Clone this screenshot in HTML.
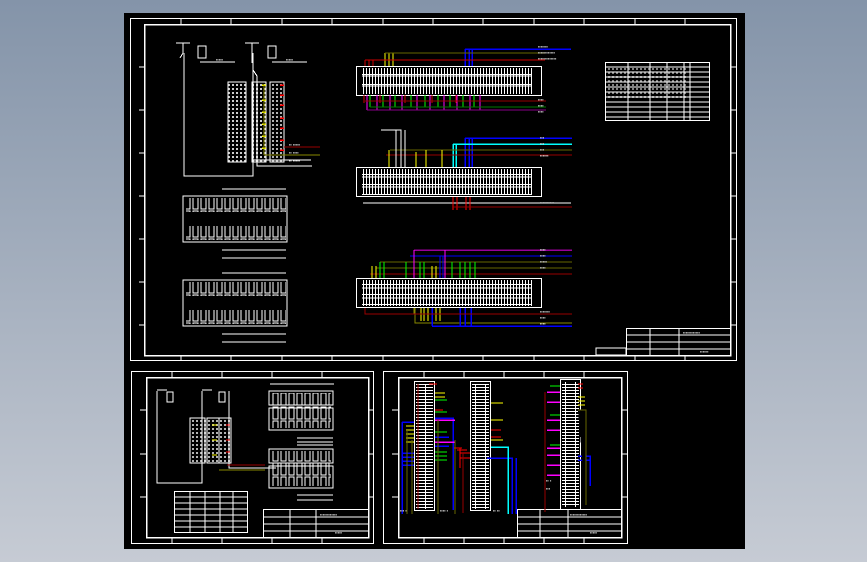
<!DOCTYPE html><html><head><meta charset="utf-8"><style>
html,body{margin:0;padding:0}
body{width:867px;height:562px;overflow:hidden;background:linear-gradient(#8494a9,#c6cbd4);font-family:"Liberation Sans",sans-serif}
svg{position:absolute;left:0;top:0}
</style></head><body>
<svg width="867" height="562" viewBox="0 0 867 562" shape-rendering="crispEdges">
<defs>
<pattern id="vl" width="3" height="10" patternUnits="userSpaceOnUse"><rect x="0" y="0" width="1" height="10" fill="#fff"/><rect x="0" y="4" width="3" height="1" fill="#fff"/></pattern>
<pattern id="hl" width="10" height="3" patternUnits="userSpaceOnUse"><rect x="0" y="0" width="10" height="1" fill="#fff"/><rect x="5" y="0" width="1" height="3" fill="#fff"/></pattern>
<pattern id="sm" width="4" height="4" patternUnits="userSpaceOnUse"><rect width="2" height="2" fill="#fff"/></pattern>
<pattern id="blk" width="8" height="14" patternUnits="userSpaceOnUse"><rect x="1" y="1" width="5" height="12" fill="none" stroke="#fff"/></pattern>
</defs>
<rect x="124" y="13" width="621" height="536" fill="#000"/>
<g fill="none" stroke="#fff" stroke-width="1">
<rect x="130.5" y="18.5" width="606" height="342"/>
<rect x="144.5" y="24.5" width="586" height="331" stroke-width="1.5"/>
<rect x="131.5" y="371.5" width="242" height="172"/>
<rect x="146.5" y="377.5" width="222" height="160" stroke-width="1.5"/>
<rect x="383.5" y="371.5" width="244" height="172"/>
<rect x="398.5" y="377.5" width="223" height="160" stroke-width="1.5"/>
</g>
<g stroke="#fff">
<path d="M181 18v6M231 18v6M282 18v6M332 18v6M383 18v6M433 18v6M483 18v6M534 18v6M584 18v6M635 18v6M685 18v6M181 355v6M231 355v6M282 355v6M332 355v6M383 355v6M433 355v6M483 355v6M534 355v6M584 355v6M635 355v6M685 355v6M139 67h6M139 110h6M139 153h6M139 196h6M139 239h6M139 282h6M139 325h6M730 67h6M730 110h6M730 153h6M730 196h6M730 239h6M730 282h6M730 325h6"/>
<path d="M172 371v6M222 371v6M272 371v6M322 371v6M172 537v6M222 537v6M272 537v6M322 537v6M140 410h6M140 454h6M140 497h6M368 410h6M368 454h6M368 497h6"/>
<path d="M424 371v6M464 371v6M504 371v6M544 371v6M584 371v6M424 537v6M464 537v6M504 537v6M544 537v6M584 537v6M392 410h6M392 454h6M392 497h6M621 410h6M621 454h6M621 497h6"/>
</g>
<g stroke="#fff" fill="none">
<path d="M176 43h14M245 43h14M183 43v10l-3 5M252 43v20M184 53v123h69V53"/>
<rect x="198" y="46" width="8" height="12"/><rect x="268" y="46" width="8" height="12"/>
<path d="M200 62h35M272 62h35M253 70l4 6v90h55M253 160h58"/>
<rect x="228" y="82" width="18" height="80"/><rect x="252" y="82" width="14" height="80"/><rect x="270" y="82" width="14" height="80"/>
</g>
<rect x="228" y="82" width="18" height="80" fill="url(#sm)" opacity=".8"/>
<rect x="252" y="82" width="14" height="80" fill="url(#sm)" opacity=".8"/>
<rect x="270" y="82" width="14" height="80" fill="url(#sm)" opacity=".7"/>
<g stroke="#ff0" stroke-width="1.5"><path d="M262 85h4M262 100h4M262 112h4M262 124h4M262 136h4M262 148h4"/></g>
<g stroke="#f00" stroke-width="1.5"><path d="M280 85h4M280 95h4M280 105h4M280 118h4M280 128h4M280 140h4M280 150h4"/></g>
<path d="M284 147h36" stroke="#900"/><path d="M264 155h56M264 85v70" stroke="#880" fill="none"/>
<g fill="#fff" font-size="4"><text x="289" y="146">▪▪ ▪▪▪▪▪</text><text x="289" y="154">▪▪ ▪▪▪▪</text><text x="289" y="162">▪▪ ▪▪▪▪▪</text><text x="216" y="61">▪▪▪▪▪</text><text x="286" y="61">▪▪▪▪▪</text></g>
<g stroke="#fff" fill="none">
<path d="M222 189h64M222 250h64M222 258h64M222 273h64M222 334h64M222 342h64"/>
<rect x="183" y="196" width="104" height="46"/><rect x="183" y="280" width="104" height="46"/>
</g>
<rect x="186" y="198" width="100" height="14" fill="url(#blk)"/><rect x="186" y="226" width="100" height="14" fill="url(#blk)"/>
<rect x="186" y="282" width="100" height="14" fill="url(#blk)"/><rect x="186" y="310" width="100" height="14" fill="url(#blk)"/>
<g stroke="#fff" fill="none"><rect x="356.5" y="66.5" width="185" height="29"/><rect x="356.5" y="167.5" width="185" height="29"/><rect x="356.5" y="278.5" width="185" height="29"/></g>
<rect x="362" y="68" width="170" height="26" fill="url(#vl)"/><rect x="362" y="169" width="170" height="26" fill="url(#vl)"/><rect x="362" y="280" width="170" height="26" fill="url(#vl)"/>
<g stroke="#fff"><path d="M362 76h170M362 86h170M362 177h170M362 187h170M362 288h170M362 298h170M363 203h208"/></g>
<path d="M465 49h106M465 49v17M469 49v17M472 49v17" stroke="#00f" stroke-width="1.5" fill="none"/>
<path d="M385 53h160M385 53v13M389 53v13M393 53v13" stroke="#ff0" fill="none"/>
<path d="M385 53h160" stroke="#660"/>
<path d="M365 60h180M365 60v6M369 60v6M373 60v6" stroke="#c00" fill="none"/>
<g stroke="#0f0"><path d="M370 95v12M383 95v12M395 95v12M411 95v12M425 95v12M438 95v12M450 95v12M463 95v12M474 95v12"/></g>
<g stroke="#f0f"><path d="M367 95v15M377 95v15M390 95v15M402 95v15M417 95v15M430 95v15M444 95v15M457 95v15M470 95v15M480 95v15"/></g>
<g stroke="#c00"><path d="M364 95v8M380 95v8M405 95v8M432 95v8M456 95v8"/></g>
<path d="M365 101h181" stroke="#900"/><path d="M370 107h176" stroke="#070"/><path d="M367 110h179" stroke="#808"/>
<path d="M465 138h107M465 138v29M469 138v29M472 138v29" stroke="#00f" stroke-width="1.5" fill="none"/>
<path d="M453 144h119M453 144v23M456 144v23" stroke="#0ff" stroke-width="1.5" fill="none"/>
<path d="M390 150h182" stroke="#660"/><path d="M386 155h186" stroke="#900"/>
<g stroke="#ff0"><path d="M389 150v17M416 152v15M426 150v17M442 150v17"/></g>
<g stroke="#fff" fill="none"><path d="M381 130h20v37M396 130v37M405 130v37"/></g>
<g stroke="#f00"><path d="M453 197v13M457 197v13M466 197v13M470 197v13"/></g>
<path d="M453 207h119" stroke="#900"/>
<path d="M414 250h158" stroke="#909" stroke-width="1.5"/><path d="M410 256h162" stroke="#00f"/>
<path d="M380 262h192M376 268h196" stroke="#660"/><path d="M370 274h202" stroke="#900"/>
<g stroke="#0f0"><path d="M380 262v16M384 262v16M406 262v16M420 262v16M424 262v16M452 262v16M460 262v16M465 262v16M470 262v16M475 262v16"/></g>
<g stroke="#ff0"><path d="M372 266v12M376 266v12M432 266v12M436 266v12"/></g>
<g stroke="#f0f"><path d="M414 250v28M445 250v28"/></g>
<g stroke="#00f"><path d="M440 256v22M443 256v22"/></g>
<path d="M415 308v15h157M414 308v6" stroke="#880" fill="none"/>
<g stroke="#ff0"><path d="M421 308v13M424 308v13M428 308v13M432 308v13M436 308v13M440 308v13"/></g>
<path d="M432 326h140M432 308v18M460 308v18M465 308v18M471 308v18" stroke="#00f" stroke-width="1.5" fill="none"/>
<path d="M365 308v6h207" stroke="#900" fill="none"/>
<g fill="#fff" font-size="4"><text x="538" y="48">▪▪▪▪▪▪▪</text><text x="538" y="54">▪▪▪▪▪▪▪▪▪▪▪▪</text><text x="538" y="60">▪▪▪▪▪▪▪▪▪▪▪▪▪</text><text x="538" y="101">▪▪▪▪</text><text x="538" y="107">▪▪▪▪</text><text x="538" y="113">▪▪▪▪</text><text x="540" y="139">▪▪▪</text><text x="540" y="145">▪▪▪</text><text x="540" y="151">▪▪▪</text><text x="540" y="157">▪▪▪▪▪▪</text><text x="540" y="204">▪▪▪▪▪▪▪▪▪▪</text><text x="540" y="251">▪▪▪▪</text><text x="540" y="257">▪▪▪▪</text><text x="540" y="263">▪▪▪▪▪</text><text x="540" y="269">▪▪▪▪</text><text x="540" y="313">▪▪▪▪▪▪▪</text><text x="540" y="319">▪▪▪▪</text><text x="540" y="325">▪▪▪▪</text></g>
<g stroke="#fff" fill="none"><rect x="605.5" y="62.5" width="104" height="58"/><path d="M605 67h104M605 72h104M605 77h104M605 82h104M605 87h104M605 92h104M605 97h104M605 102h104M605 107h104M605 112h104M605 117h104M628 62v58M650 62v58M667 62v58M684 62v58M690 62v58"/></g>
<rect x="608" y="68" width="80" height="30" fill="url(#sm)" opacity=".5"/>
<g stroke="#fff" fill="none"><rect x="626.5" y="328.5" width="104" height="27"/><path d="M679 328v27M626 335h104M626 342h104M626 349h104M650 328v27M596 348h30v7h-30z"/></g>
<g fill="#fff" font-size="4"><text x="683" y="334">▪▪▪▪▪▪▪▪▪▪▪▪</text><text x="700" y="353">▪▪▪▪▪▪</text></g>
<g stroke="#fff" fill="none">
<path d="M157 391v92h45V391M229 391v77h47M157 390h10M202 390h10"/>
<rect x="167" y="392" width="6" height="10"/><rect x="219" y="392" width="6" height="10"/>
<rect x="190" y="418" width="15" height="45"/><rect x="207" y="418" width="12" height="45"/><rect x="219" y="418" width="12" height="45"/>
<rect x="269" y="391" width="64" height="14"/><rect x="269" y="408" width="64" height="22"/><rect x="269" y="449" width="64" height="14"/><rect x="269" y="466" width="64" height="22"/>
<path d="M270 384h64M297 438h36M297 445h36M297 442h36M297 495h36M297 500h36"/>
<rect x="174.5" y="491.5" width="73" height="41"/><path d="M174 497h73M174 503h73M174 509h73M174 515h73M174 521h73M174 527h73M190 491v41M205 491v41M220 491v41M233 491v41"/>
<rect x="263.5" y="509.5" width="105" height="28"/><path d="M316 509v28M263 517h105M263 524h105M263 531h105M290 509v28"/>
</g>
<rect x="190" y="418" width="40" height="45" fill="url(#sm)" opacity=".7"/>
<rect x="271" y="393" width="60" height="35" fill="url(#blk)"/><rect x="271" y="451" width="60" height="35" fill="url(#blk)"/>
<path d="M227 465h38" stroke="#900"/><path d="M219 470h46" stroke="#880"/>
<g stroke="#ff0"><path d="M212 425h5M212 440h5M212 455h5"/></g><g stroke="#f00"><path d="M226 425h4M226 440h4M226 452h4"/></g>
<g fill="#fff" font-size="4"><text x="320" y="516">▪▪▪▪▪▪▪▪▪▪▪▪</text><text x="335" y="534">▪▪▪▪▪</text></g>
<g stroke="#fff" fill="none"><rect x="414.5" y="381.5" width="20" height="129"/><rect x="470.5" y="381.5" width="20" height="129"/><rect x="560.5" y="379.5" width="20" height="130"/>
<rect x="517.5" y="509.5" width="104" height="28"/><path d="M568 509v28M517 517h104M517 524h104M517 531h104M540 509v28"/></g>
<rect x="416" y="384" width="17" height="125" fill="url(#hl)"/><rect x="472" y="384" width="17" height="125" fill="url(#hl)"/><rect x="562" y="382" width="17" height="125" fill="url(#hl)"/>
<g stroke="#00f" stroke-width="1.5" fill="none"><path d="M402 422h12M402 422v92M402 453h12M402 457h12M402 461h12M402 465h12M435 418h18v92M435 437h14M435 442h14M435 446h14M487 458h25v56M516 458v56M578 456h12v30M578 460h12"/></g>
<g stroke="#ff0"><path d="M406 426h8M406 430h8M406 434h8M406 438h8M406 442h8M435 393h10M435 397h10M491 403h12M491 420h12M491 440h12M578 397h7M578 401h7M578 405h7"/></g>
<g stroke="#0f0"><path d="M435 400h12M435 412h12M435 432h12M435 452h12M435 456h12M435 460h12M550 386h10M550 415h10M550 445h10M550 465h10"/></g>
<g stroke="#f0f" stroke-width="1.5"><path d="M435 420h20M435 442h20M547 392h13M547 402h13M547 420h13M547 430h13M547 448h13M547 455h13M547 465h13M547 475h13"/></g>
<g stroke="#f00"><path d="M429 384h8M435 410h8M454 448h8M460 448v20M460 453h10M460 458h10M457 450h10M491 430h10M491 437h10M578 384h5M578 388h5"/></g>
<g stroke="#0ff" stroke-width="1.5" fill="none"><path d="M491 447h17v67"/></g>
<g stroke="#660"><path d="M407 430v84M412 440v74M438 420v94M455 440v74M578 410h8v95"/></g>
<g stroke="#900"><path d="M418 384v125M463 453v60M545 392v120"/></g>
<g fill="#fff" font-size="4"><text x="570" y="516">▪▪▪▪▪▪▪▪▪▪▪▪</text><text x="590" y="534">▪▪▪▪▪</text><text x="400" y="512">▪▪▪ ▪</text><text x="440" y="512">▪▪▪▪ ▪</text><text x="493" y="512">▪▪ ▪▪</text><text x="546" y="482">▪▪ ▪</text><text x="546" y="490">▪▪▪</text></g>
</svg>
</body></html>
